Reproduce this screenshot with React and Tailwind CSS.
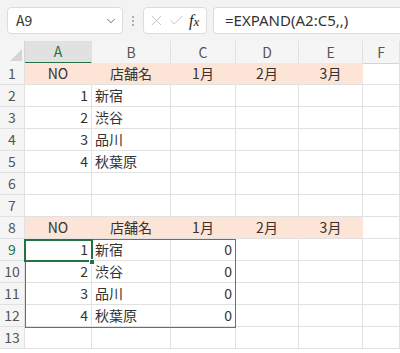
import React from "react";
import { ChevronDown, X, Check } from "lucide-react";

const cols = ["A", "B", "C", "D", "E", "F"];
const colTpl = "grid grid-cols-[25px_67px_79px_65px_63px_64px_1fr]";

const headRow = ["NO", "店舗名", "1月", "2月", "3月"];
const stores = ["新宿", "渋谷", "品川", "秋葉原"];

const Cell = ({ children, className = "" }) => (
  <div className={`h-[22px] border-r border-b border-[#e1e1e1] flex items-center px-[3px] overflow-visible whitespace-nowrap ${className}`}>
    {children}
  </div>
);

const RowHead = ({ n, active }) => (
  <div
    className={`h-[22px] border-r border-b border-[#e1e1e1] bg-[#f5f5f5] flex items-center justify-center text-[14px] ${
      active ? "text-[#217346] bg-[#e1e1e1]" : "text-[#555]"
    }`}
  >
    {n}
  </div>
);

const rows = () => {
  const out = [];
  for (let r = 1; r <= 13; r++) {
    let cells = ["", "", "", "", "", ""];
    let peach = false;
    if (r === 1 || r === 8) {
      cells = [...headRow, ""];
      peach = true;
    } else if (r >= 2 && r <= 5) {
      cells = [String(r - 1), stores[r - 2], "", "", "", ""];
    } else if (r >= 9 && r <= 12) {
      cells = [String(r - 8), stores[r - 9], "0", "", "", ""];
    }
    out.push({ r, cells, peach });
  }
  return out;
};

export default function App() {
  return (
    <div className="w-[400px] h-[353px] overflow-hidden bg-white text-[#333] font-['Noto_Sans_CJK_JP','Noto_Sans',sans-serif]">
      {/* formula bar */}
      <div className="h-[41px] bg-[#f3f3f3] flex items-center pl-[7px] gap-0">
        <div className="w-[116px] h-[27px] bg-white border border-[#dcdcdc] rounded-[4px] flex items-center justify-between pl-[8px] pr-[4px] text-[14px] text-[#333]">
          <span>A9</span>
          <ChevronDown size={14} strokeWidth={1.6} className="text-[#666]" />
        </div>
        <div className="w-[20px] flex flex-col items-center gap-[2px]">
          <span className="w-[2px] h-[2px] bg-[#999] rounded-full" />
          <span className="w-[2px] h-[2px] bg-[#999] rounded-full" />
          <span className="w-[2px] h-[2px] bg-[#999] rounded-full" />
        </div>
        <div className="w-[64px] h-[27px] bg-white border border-[#dcdcdc] rounded-[4px] flex items-center pl-[4px] gap-[3px]">
          <X size={17} strokeWidth={1.2} className="text-[#bbb]" />
          <Check size={17} strokeWidth={1.2} className="text-[#bbb]" />
          <span className="font-['Liberation_Serif',serif] italic text-[16px] text-[#222] ml-[1px]">
            f<span className="text-[13px]">x</span>
          </span>
        </div>
        <div className="ml-[6px] flex-1 h-[27px] bg-white border border-[#dcdcdc] border-r-0 rounded-l-[4px] flex items-center pl-[11px] text-[15px] text-[#333] font-['Noto_Sans',sans-serif]">
          =EXPAND(A2:C5,,)
        </div>
      </div>

      {/* column header */}
      <div className={`${colTpl} h-[22px] bg-[#f5f5f5]`}>
        <div className="border-r border-b border-[#d4d4d4] flex items-end justify-end pr-[2px] pb-[2px]">
          <div className="w-0 h-0 border-l-[12px] border-l-transparent border-b-[12px] border-b-[#d5d5d5]" />
        </div>
        {cols.map((c) => (
          <div
            key={c}
            className={`flex items-center justify-center text-[14px] border-r border-[#e1e1e1] ${
              c === "A" ? "bg-[#e1e1e1] text-[#217346] border-b-2 border-b-[#217346]" : "text-[#555] border-b border-b-[#d4d4d4]"
            }`}
          >
            {c}
          </div>
        ))}
      </div>

      {/* grid */}
      <div className="relative">
        {rows().map(({ r, cells, peach }) => (
          <div key={r} className={colTpl}>
            <RowHead n={r} active={r === 9} />
            {cells.map((v, i) => {
              const bg = peach && i < 5 ? "bg-[#fce4d6] border-r-[#fce4d6]" : "";
              const align = peach ? "justify-center" : i === 1 ? "justify-start" : "justify-end";
              return (
                <Cell key={i} className={`${bg} ${align} text-[14px]`}>
                  {v}
                </Cell>
              );
            })}
          </div>
        ))}
        {/* spill range border */}
        <div className="absolute left-[25px] top-[176px] w-[211px] h-[89px] border border-[#4472c4] pointer-events-none" />
        {/* active cell */}
        <div className="absolute left-[24px] top-[176px] w-[69px] h-[23px] border-2 border-[#217346] pointer-events-none" />
        <div className="absolute left-[89px] top-[196px] w-[6px] h-[6px] bg-[#217346] border border-white pointer-events-none" />
      </div>
    </div>
  );
}
